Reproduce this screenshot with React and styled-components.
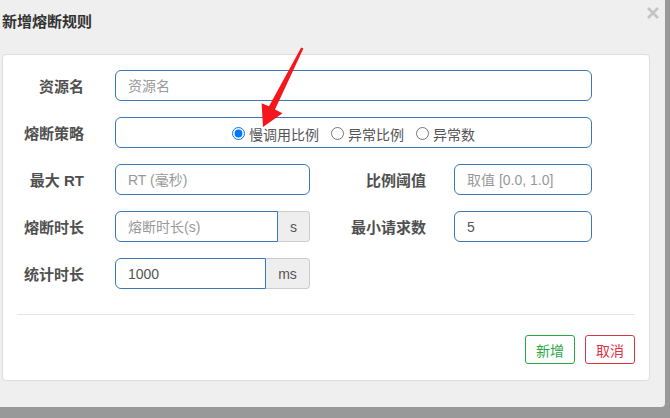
import React from 'react';
import styled, { createGlobalStyle } from 'styled-components';

const GlobalStyle = createGlobalStyle`
    html, body {
        margin: 0;
        padding: 0;
        background: #999;
    }
    body {
        font-family: "Liberation Sans", "Noto Sans CJK SC", sans-serif;
        font-size: 14px;
        color: #333;
    }
`;

// 화면 전체
const Page = styled.div`
    position: relative;
    width: 670px;
    height: 418px;
    overflow: hidden;
`;

// 모달 본체
const Dialog = styled.div`
    box-sizing: border-box;
    width: 665px;
    height: 407px;
    background: #efefef;
    border-radius: 0 0 4px 0;
    padding: 0 15px 0 2px;
`;

const Header = styled.div`
    display: flex;
    justify-content: space-between;
    align-items: flex-start;
    height: 54px;
`;

const Title = styled.h4`
    margin: 12px 0 0;
    font-size: 15px;
    line-height: 20px;
    font-weight: bold;
    color: #333;
`;

const Close = styled.button`
    border: 0;
    background: none;
    padding: 0;
    margin: 6px -10px 0 0;
    width: 14px;
    height: 14px;
    cursor: pointer;
    color: #c4c4c4;
`;

const Panel = styled.div`
    background: #fff;
    border: 1px solid #ddd;
    border-radius: 4px;
    padding: 15px 0 16px;
`;

const Form = styled.div`
    display: flex;
    flex-direction: column;
    gap: 16px;
`;

const Row = styled.div`
    display: flex;
    align-items: center;
    height: 31px;
`;

const Label = styled.label`
    box-sizing: border-box;
    width: ${p => p.$w || 81}px;
    margin-right: ${p => p.$gap || 31}px;
    text-align: right;
    font-size: 15px;
    font-weight: bold;
    color: #505050;
    white-space: nowrap;
`;

const Field = styled.div`
    display: flex;
    width: ${p => p.$w}px;
    height: 31px;
`;

const Input = styled.input`
    box-sizing: border-box;
    flex: 1;
    min-width: 0;
    height: 31px;
    padding: 0 12px;
    border: 1px solid #3a78b8;
    border-radius: ${p => (p.$addon ? '6px 0 0 6px' : '6px')};
    font-family: inherit;
    font-size: 14px;
    color: #555;
    outline: none;
    &::placeholder {
        color: #999;
    }
`;

const Addon = styled.span`
    box-sizing: border-box;
    display: flex;
    align-items: center;
    justify-content: center;
    width: ${p => p.$w}px;
    height: 31px;
    background: #eee;
    border: 1px solid #ccc;
    border-left: 0;
    border-radius: 0 4px 4px 0;
    color: #555;
    font-size: 14px;
`;

const RadioBox = styled.div`
    box-sizing: border-box;
    display: flex;
    align-items: center;
    justify-content: center;
    gap: 12px;
    width: 477px;
    height: 31px;
    border: 1px solid #3a78b8;
    border-radius: 6px;
    padding-top: 2px;
`;

const RadioItem = styled.label`
    display: flex;
    align-items: center;
    gap: 4px;
    font-size: 14px;
    color: #555;
    input {
        margin: 0;
        width: 13px;
        height: 13px;
    }
`;

const Footer = styled.div`
    display: flex;
    justify-content: flex-end;
    gap: 10px;
    margin: 25px 14px 0;
    padding-top: 20px;
    border-top: 1px solid #e5e5e5;
`;

const Button = styled.button`
    box-sizing: border-box;
    width: 50px;
    height: 29px;
    background: #fff;
    border: 1px solid ${p => p.$color};
    border-radius: 3px;
    color: ${p => p.$color};
    font-family: inherit;
    font-size: 14px;
    padding: 0;
    cursor: pointer;
`;

// 빨간 화살표 (스크린샷 위의 주석)
const Arrow = styled.svg`
    position: absolute;
    left: 0;
    top: 0;
    pointer-events: none;
`;

const App = () => {
    return (
        <Page>
            <GlobalStyle />
            <Dialog>
                <Header>
                    <Title>新增熔断规则</Title>
                    <Close aria-label="close">
                        <svg width="14" height="14" viewBox="0 0 14 14">
                            <path d="M2 2 L12 12 M12 2 L2 12" stroke="currentColor" strokeWidth="2.6" />
                        </svg>
                    </Close>
                </Header>
                <Panel>
                    <Form>
                        <Row>
                            <Label>资源名</Label>
                            <Field $w={477}><Input placeholder="资源名" /></Field>
                        </Row>
                        <Row>
                            <Label>熔断策略</Label>
                            <RadioBox>
                                <RadioItem><input type="radio" name="grade" defaultChecked />慢调用比例</RadioItem>
                                <RadioItem><input type="radio" name="grade" />异常比例</RadioItem>
                                <RadioItem><input type="radio" name="grade" />异常数</RadioItem>
                            </RadioBox>
                        </Row>
                        <Row>
                            <Label>最大 RT</Label>
                            <Field $w={195}><Input placeholder="RT (毫秒)" /></Field>
                            <Label $w={116} $gap={28}>比例阈值</Label>
                            <Field $w={138}><Input placeholder="取值 [0.0, 1.0]" /></Field>
                        </Row>
                        <Row>
                            <Label>熔断时长</Label>
                            <Field $w={195}>
                                <Input $addon placeholder="熔断时长(s)" />
                                <Addon $w={32}>s</Addon>
                            </Field>
                            <Label $w={116} $gap={28}>最小请求数</Label>
                            <Field $w={138}><Input defaultValue="5" /></Field>
                        </Row>
                        <Row>
                            <Label>统计时长</Label>
                            <Field $w={195}>
                                <Input $addon defaultValue="1000" />
                                <Addon $w={44}>ms</Addon>
                            </Field>
                        </Row>
                    </Form>
                    <Footer>
                        <Button $color="#28a745">新增</Button>
                        <Button $color="#dc3545">取消</Button>
                    </Footer>
                </Panel>
            </Dialog>
            <Arrow width="670" height="418" viewBox="0 0 670 418">
                <polygon
                    points="301.2,47.4 303.4,48.6 275,109.6 282.5,113.2 263,127 261.6,103.2 269,106.2"
                    fill="#f5171b"
                />
            </Arrow>
        </Page>
    );
};

export default App;
